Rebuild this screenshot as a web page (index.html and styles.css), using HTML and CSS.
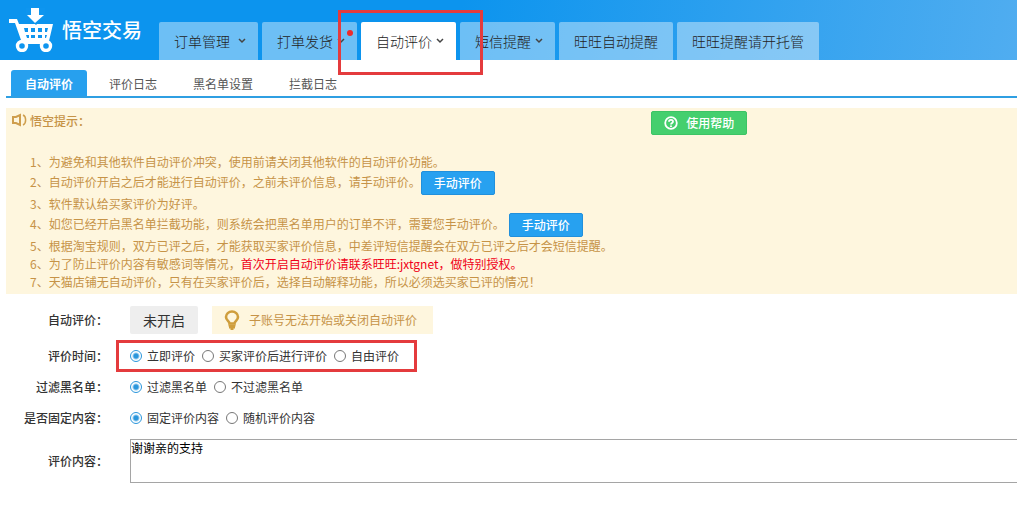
FILE: index.html
```html
<!DOCTYPE html>
<html lang="zh-CN">
<head>
    <meta charset="utf-8">
    <title>悟空交易</title>
    <link rel="stylesheet" href="styles.css">
</head>
<body>
    <header class="header">
        <a href="#" class="logo">
            <svg class="logo-icon" width="44" height="44" viewBox="0 0 44 44">
                <path d="M0 11h8l2 5h34l-4 17 1 3H10l2-4L6 15H0z" fill="#fff"/>
                <path d="M17 0h19v8l-9 9-10-9z" fill="#0e95ef"/>
                <path d="M22 0h8v7h5l-9 8-8-8h4z" fill="#fff"/>
                <path d="M15 20h4v4h-3zM22 20h4v4h-4zM29 20h4v4h-4zM36 20h3l-1 4h-2zM17 27h3v3h-2zM22 27h4v3h-4zM29 27h4v3h-4zM36 27h2l-1 3h-1z" fill="#0e95ef"/>
                <circle cx="13" cy="38" r="4.500" fill="#0e95ef" stroke="#fff" stroke-width="3.400"/>
                <circle cx="37" cy="38" r="4.500" fill="#0e95ef" stroke="#fff" stroke-width="3.400"/>
            </svg>
            <span>悟空交易</span>
        </a>
        <nav class="nav">
            <a href="#" class="nav-item wide">订单管理<svg class="arrow" width="8" height="6" viewBox="0 0 8 6"><path d="M1 1l3 3 3-3"/></svg></a>
            <a href="#" class="nav-item">打单发货<svg class="arrow" width="8" height="6" viewBox="0 0 8 6"><path d="M1 1l3 3 3-3"/></svg><i class="dot"></i></a>
            <a href="#" class="nav-item active">自动评价<svg class="arrow" width="8" height="6" viewBox="0 0 8 6"><path d="M1 1l3 3 3-3"/></svg><i class="mark mark-tab"></i></a>
            <a href="#" class="nav-item">短信提醒<svg class="arrow" width="8" height="6" viewBox="0 0 8 6"><path d="M1 1l3 3 3-3"/></svg></a>
            <a href="#" class="nav-item plain">旺旺自动提醒</a>
            <a href="#" class="nav-item plain">旺旺提醒请开托管</a>
        </nav>
    </header>

    <main class="main">
        <nav class="sub-nav">
            <a href="#" class="active">自动评价</a>
            <a href="#">评价日志</a>
            <a href="#">黑名单设置</a>
            <a href="#">拦截日志</a>
        </nav>

        <section class="notice">
            <div class="notice-head">
                <h2>
                    <svg width="16" height="14" viewBox="0 0 16 14" fill="none" stroke="#cf9e4d" stroke-width="2">
                        <path d="M2 4h3L9 2v10l-4-2H2z"/>
                        <path d="M12 2c3.500 1.500 3.500 8.500 0 10" stroke-width="1.500"/>
                    </svg>
                    悟空提示：
                </h2>
                <button type="button" class="btn btn-help">
                    <svg width="14" height="14" viewBox="0 0 14 14" fill="none" stroke="#fff" stroke-width="1.800">
                        <circle cx="7" cy="7" r="5.800"/>
                        <path d="M5 5.700c0-2.500 4-2.500 4 0 0 1.300-2 1.200-2 2.700M7 9.400v1.500"/>
                    </svg>
                    使用帮助
                </button>
            </div>
            <div class="tips">
                <p>1、为避免和其他软件自动评价冲突，使用前请关闭其他软件的自动评价功能。</p>
                <p class="has-btn">2、自动评价开启之后才能进行自动评价，之前未评价信息，请手动评价。<button type="button" class="btn">手动评价</button></p>
                <p>3、软件默认给买家评价为好评。</p>
                <p class="has-btn far">4、如您已经开启黑名单拦截功能，则系统会把黑名单用户的订单不评，需要您手动评价。<button type="button" class="btn">手动评价</button></p>
                <p>5、根据淘宝规则，双方已评之后，才能获取买家评价信息，中差评短信提醒会在双方已评之后才会短信提醒。</p>
                <p>6、为了防止评价内容有敏感词等情况，<span class="red">首次开启自动评价请联系旺旺:jxtgnet，做特别授权。</span></p>
                <p>7、天猫店铺无自动评价，只有在买家评价后，选择自动解释功能，所以必须选买家已评的情况！</p>
            </div>
        </section>

        <form class="form">
            <div class="row row-status">
                <label class="name" for="status">自动评价：</label>
                <button type="button" class="status" id="status">未开启</button>
                <div class="sub-tip">
                    <svg width="16" height="20" viewBox="0 0 16 20" fill="none" stroke="#cf9e3d">
                        <path d="M5.500 13.500C5.500 11 2 10.500 2 7a6 5.500 0 0 1 12 0c0 3.500-3.500 4-3.500 6.500z" stroke-width="2.600"/>
                        <path d="M4.500 15.500h7M5 17.500h6M6.500 19h3" stroke-width="1.800"/>
                    </svg>
                    <span>子账号无法开始或关闭自动评价</span>
                </div>
            </div>
            <div class="row" role="radiogroup" aria-labelledby="time">
                <span class="name" id="time">评价时间：</span>
                <div class="radios">
                    <label><input type="radio" name="time" checked>立即评价</label>
                    <label><input type="radio" name="time">买家评价后进行评价</label>
                    <label><input type="radio" name="time">自由评价</label>
                    <i class="mark mark-radios"></i>
                </div>
            </div>
            <div class="row" role="radiogroup" aria-labelledby="black">
                <span class="name" id="black">过滤黑名单：</span>
                <div class="radios">
                    <label><input type="radio" name="black" checked>过滤黑名单</label>
                    <label><input type="radio" name="black">不过滤黑名单</label>
                </div>
            </div>
            <div class="row" role="radiogroup" aria-labelledby="fixed">
                <span class="name" id="fixed">是否固定内容：</span>
                <div class="radios">
                    <label><input type="radio" name="fixed" checked>固定评价内容</label>
                    <label><input type="radio" name="fixed">随机评价内容</label>
                </div>
            </div>
            <div class="row row-content">
                <label class="name" for="content">评价内容：</label>
                <textarea id="content">谢谢亲的支持</textarea>
            </div>
        </form>
    </main>
</body>
</html>
```
FILE: styles.css
```css
* {
    box-sizing: border-box;
}
body, h2, p {
    margin: 0;
}
body {
    font-family: "Noto Sans CJK SC", sans-serif;
    font-size: 12px;
    line-height: 18px;
    color: #333;
    background: #fff;
}
a {
    text-decoration: none;
    color: inherit;
}
button, textarea {
    font-family: inherit;
}

/* header */
.header {
    display: flex;
    height: 60px;
    padding-left: 9px;
    background: linear-gradient(100deg, #0c94ee 0%, #0c94ee 45%, #50adf0 100%);
}
.logo {
    display: flex;
    align-items: center;
    gap: 9px;
    width: 150px;
    font-size: 20px;
    font-weight: 500;
    color: #fff;
}
.nav {
    display: flex;
    align-items: flex-end;
    gap: 4px;
}
.nav-item {
    position: relative;
    display: flex;
    align-items: center;
    gap: 4px;
    height: 38px;
    padding: 0 12px 0 15px;
    border-radius: 2px 2px 0 0;
    background: rgba(255, 255, 255, 0.4);
    font-size: 14px;
    font-weight: 300;
    color: #222;
    white-space: nowrap;
}
.nav-item.wide {
    gap: 8px;
}
.nav-item.plain {
    padding-right: 15px;
}
.nav-item.active {
    background: #fff;
}
.arrow {
    fill: none;
    stroke: #444;
    stroke-width: 1.5;
}
.dot {
    position: absolute;
    top: 8px;
    right: 4px;
    width: 6px;
    height: 6px;
    border-radius: 50%;
    background: #ee2b2b;
}

/* red frames over the page */
.mark {
    position: absolute;
    z-index: 1;
    border: 3px solid #e43b3d;
    pointer-events: none;
}
.mark-tab {
    top: -12px;
    right: -27px;
    bottom: -15px;
    left: -23px;
}
.mark-radios {
    top: -7px;
    right: -18px;
    bottom: -7px;
    left: -14px;
}

/* sub navigation */
.main {
    padding: 10px 0 24px 6px;
}
.sub-nav {
    display: flex;
    gap: 8px;
    padding-left: 5px;
    border-bottom: 2px solid #2f9fe2;
}
.sub-nav a {
    padding: 5px 14px 3px;
    color: #555;
    border-radius: 3px 3px 0 0;
}
.sub-nav .active {
    background: #27a0ee;
    color: #fff;
    font-weight: bold;
}

/* notice */
.notice {
    margin-top: 10px;
    padding: 3px 0 3px 5px;
    background: #fef6de;
    color: #c69347;
}
.notice-head {
    display: grid;
    grid-template-columns: 7fr 4fr;
    justify-items: start;
}
.notice h2 {
    display: flex;
    gap: 3px;
    padding-top: 1px;
    font-size: 12px;
    font-weight: 500;
}
.notice h2 svg {
    margin-top: 1px;
}
.btn {
    height: 24px;
    padding: 0 12px;
    border: 1px solid #2190dc;
    border-radius: 2px;
    background: #27a1f0;
    color: #fff;
    font-size: 12px;
    font-weight: 500;
    line-height: 22px;
}
.btn-help {
    display: flex;
    align-items: center;
    gap: 8px;
    border-color: #3cc465;
    background: #45cf6e;
}
.tips {
    padding: 18px 0 0 19px;
}
.tips .has-btn {
    display: flex;
    line-height: 22px;
}
.tips .far {
    gap: 4px;
}
.red {
    color: #f00018;
}

/* form */
.form {
    padding-top: 12px;
}
.row {
    display: flex;
    align-items: center;
    margin-bottom: 13px;
}
.name {
    flex: none;
    width: 102px;
    margin-right: 22px;
    text-align: right;
    font-weight: 500;
}
.status {
    height: 28px;
    padding: 0 13px;
    border: 0;
    border-radius: 2px;
    background: #eee;
    color: #333;
    font-size: 14px;
}
.sub-tip {
    display: flex;
    align-items: center;
    gap: 9px;
    height: 28px;
    margin-left: 14px;
    padding: 0 16px 0 12px;
    background: #fef6de;
    color: #c69347;
}
.radios {
    position: relative;
    display: flex;
    gap: 7px;
}
.radios label {
    display: flex;
    align-items: center;
    gap: 5px;
}
.radios input {
    appearance: none;
    width: 12px;
    height: 12px;
    margin: 0;
    border: 1px solid #777;
    border-radius: 50%;
    background: #fff;
}
.radios input:checked {
    border-color: #2a96dc;
    background: radial-gradient(circle, #2a96dc 2px, #fff 4px);
}
.row-content {
    margin-top: -1px;
    margin-bottom: 0;
}
textarea {
    flex: 1;
    height: 44px;
    padding: 0;
    border: 1px solid #a5a5a5;
    border-right: 0;
    color: #000;
    font-size: 12px;
    line-height: 16px;
    resize: none;
}
```
